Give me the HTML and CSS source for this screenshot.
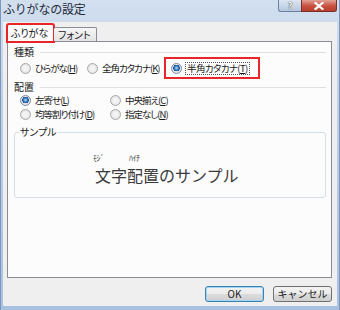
FILE: index.html
```html
<!DOCTYPE html>
<html lang="ja">
<head>
    <meta charset="UTF-8">
    <title>ふりがなの設定</title>
    <link rel="stylesheet" href="styles.css">
</head>
<body>
    <div class="window">
        <!-- タイトルバー -->
        <div class="titlebar">
            <span class="title">ふりがなの設定</span>
            <div class="caption-btns">
                <span class="cap-btn cap-help">?</span>
                <span class="cap-btn cap-close">
                    <svg width="10" height="8" viewBox="0 0 10 8">
                        <path d="M1.5 1 L8.5 7 M8.5 1 L1.5 7" stroke="#fff" stroke-width="2.2" stroke-linecap="square"/>
                    </svg>
                </span>
            </div>
        </div>

        <div class="client">
            <!-- タブ -->
            <div class="tabs">
                <div class="tab tab-active">ふりがな</div>
                <div class="tab">フォント</div>
            </div>

            <div class="panel">
                <div class="section-head"><span>種類</span><i class="rule"></i></div>
                <div class="row-kind">
                    <label class="opt opt-hira"><span class="radio"></span>ひらがな(<u>H</u>)</label>
                    <label class="opt opt-zen"><span class="radio"></span>全角カタカナ(<u>K</u>)</label>
                    <div class="mark">
                        <label class="opt"><span class="radio radio-on"></span><span class="focus">半角カタカナ(<u>T</u>)</span></label>
                    </div>
                </div>

                <div class="section-head section-place"><span>配置</span><i class="rule"></i></div>
                <div class="align-grid">
                    <label class="opt"><span class="radio radio-on"></span>左寄せ(<u>L</u>)</label>
                    <label class="opt"><span class="radio"></span>中央揃え(<u>C</u>)</label>
                    <label class="opt"><span class="radio"></span>均等割り付け(<u>D</u>)</label>
                    <label class="opt"><span class="radio"></span>指定なし(<u>N</u>)</label>
                </div>

                <fieldset class="sample">
                    <legend>サンプル</legend>
                    <div class="sample-text">
                        <span class="rb"><span class="rt">ﾓｼﾞ</span>文字</span><span class="rb"><span class="rt rt-2">ﾊｲﾁ</span>配置</span><span>のサンプル</span>
                    </div>
                </fieldset>
            </div>

            <div class="actions">
                <button class="btn btn-default">OK</button>
                <button class="btn">キャンセル</button>
            </div>
        </div>
    </div>
</body>
</html>
```

FILE: styles.css
```css
* {
    margin: 0;
    padding: 0;
    box-sizing: border-box;
}

body {
    width: 340px;
    height: 310px;
    overflow: hidden;
    font-family: "Noto Sans CJK JP", "Noto Sans", sans-serif;
    font-size: 10px;
    color: #1a1a1a;
}

.window {
    width: 340px;
    height: 310px;
    display: flex;
    flex-direction: column;
    background: linear-gradient(180deg, #d2dfef 0%, #c0d2e9 30%, #a9c1e0 100%);
    border-left: 1px solid #7d97bf;
    border-right: 1px solid #7d97bf;
}

.titlebar {
    height: 22px;
    display: flex;
    align-items: flex-start;
    padding-left: 2px;
}

.title {
    font-size: 12px;
    line-height: 18px;
    color: #1e2a3a;
    letter-spacing: -0.2px;
}

.caption-btns {
    margin-left: auto;
    margin-right: 2px;
    display: flex;
}

.cap-btn {
    height: 12px;
    display: flex;
    align-items: center;
    justify-content: center;
    border: 1px solid #6b7f9e;
    border-top: none;
}

.cap-help {
    width: 23px;
    background: linear-gradient(180deg, #dce6f3, #b6c7de);
    border-radius: 0 0 0 3px;
    border-right: none;
    font-size: 9px;
    line-height: 11px;
    font-weight: bold;
    color: #fff;
    text-shadow: 0 0 1px #333, 0 0 1px #333;
}

.cap-close {
    width: 36px;
    background: linear-gradient(180deg, #e4a195, #c7503e 55%, #b8402e);
    border-color: #7a3028;
    border-radius: 0 0 3px 0;
}

.client {
    flex: 1;
    margin: 0 2px 4px 2px;
    background: #f0eff0;
    display: flex;
    flex-direction: column;
    padding: 2px 5px 0 4px;
    font-feature-settings: "palt";
}

.tabs {
    display: flex;
    align-items: flex-end;
    height: 17px;
    position: relative;
    z-index: 1;
}

.tab {
    height: 14px;
    padding: 0 5px 0 4px;
    line-height: 13px;
    white-space: nowrap;
    background: linear-gradient(180deg, #f6f6f6, #e3e3e3);
    border: 1px solid #898c95;
    border-bottom: none;
    border-left: none;
    border-radius: 2px 2px 0 0;
}

.tab-active {
    height: 18px;
    width: 47px;
    margin-bottom: -1px;
    padding-left: 3px;
    background: #fcfcfc;
    border-left: 1px solid #898c95;
    line-height: 16px;
    outline: 2px solid #e8262a;
    outline-offset: -1px;
}

.panel {
    height: 237px;
    background: #fcfcfc;
    border: 1px solid #898c95;
    padding: 3px 5px 0 6px;
}

.section-head {
    display: flex;
    align-items: center;
    height: 12px;
}

.section-place {
    height: 14px;
}

.rule {
    flex: 1;
    margin-left: 6px;
    border-top: 1px solid #e0e0e0;
    margin-top: 2px;
}

.opt {
    display: flex;
    align-items: center;
    white-space: nowrap;
    font-size: 9.5px;
    letter-spacing: -1px;
}

.opt u {
    text-underline-offset: 1px;
}

.radio {
    width: 11px;
    height: 11px;
    border-radius: 50%;
    border: 1px solid #a8a8a8;
    background: radial-gradient(circle at 50% 50%, #f4f4f4 30%, #d9d9d9 100%);
    margin-right: 4px;
    flex-shrink: 0;
}

.radio-on {
    border-color: #7b8ba3;
    background: radial-gradient(circle at 50% 45%, #bde0fa 0, #3d83c8 28%, #1e4f8c 48%, #e8eaee 52%, #d2d5db 100%);
}

.row-kind {
    display: flex;
    align-items: center;
    height: 22px;
    padding-left: 6px;
}

.opt-hira {
    width: 67px;
}

.opt-zen {
    width: 77px;
}

.mark {
    border: 2px solid #e8262a;
    height: 22px;
    width: 96px;
    display: flex;
    align-items: center;
    padding-left: 5px;
}

.focus {
    outline: 1px dotted #555;
    outline-offset: 0;
    padding: 0 1px;
    line-height: 11px;
    letter-spacing: -0.6px;
}

.align-grid {
    display: grid;
    grid-template-columns: 90px auto;
    grid-auto-rows: 14px;
    padding-left: 6px;
}

.sample {
    margin-top: 6px;
    height: 71px;
    border: 1px solid #d5dde6;
    border-radius: 3px;
    padding: 0;
}

.sample legend {
    margin-left: 4px;
    padding: 0 1px;
    font-size: 10px;
    line-height: 10px;
}

.sample-text {
    margin-top: 17px;
    padding-left: 80px;
    font-size: 16px;
    line-height: 16px;
    color: #3a3a3a;
    display: flex;
    align-items: flex-end;
    font-feature-settings: normal;
}

.rb {
    display: inline-flex;
    flex-direction: column;
    align-items: flex-start;
}

.rt {
    font-size: 8px;
    line-height: 8px;
    margin-left: -2px;
    margin-bottom: 5px;
    letter-spacing: -0.5px;
}

.rt-2 {
    margin-left: 2px;
}

.actions {
    display: flex;
    justify-content: flex-end;
    gap: 9px;
    margin-top: 8px;
}

.btn {
    width: 59px;
    height: 16px;
    font-family: inherit;
    font-size: 10px;
    line-height: 12px;
    color: #1a1a1a;
    background: linear-gradient(180deg, #f3f3f3 0%, #ebebeb 50%, #dcdcdc 51%, #cfcfcf 100%);
    border: 1px solid #707070;
    border-radius: 3px;
}

.btn-default {
    border-color: #3c7fb1;
    box-shadow: inset 0 0 0 1px #9fd6f3;
}
```
